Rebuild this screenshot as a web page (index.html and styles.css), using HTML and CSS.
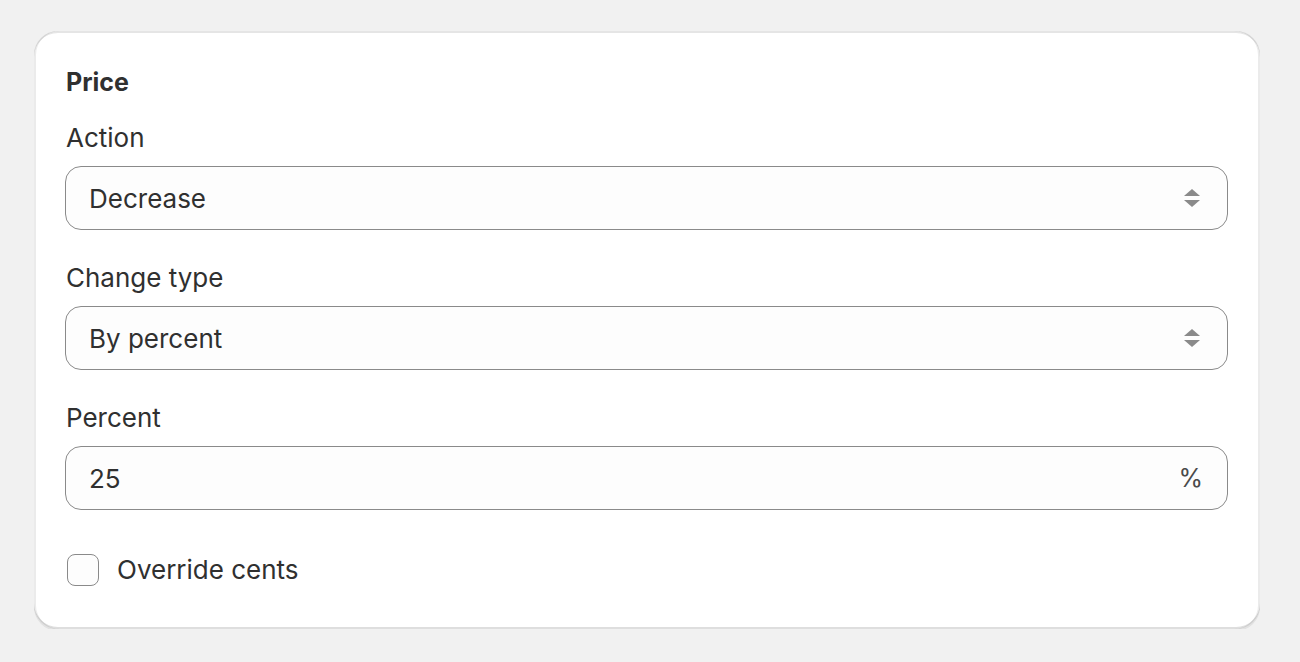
FILE: index.html
```html
<!DOCTYPE html>
<html lang="en">
<head>
<meta charset="utf-8">
<title>Price</title>
<link rel="stylesheet" href="styles.css">
</head>
<body>
  <section class="card">
    <h2 class="card-title">Price</h2>

    <div class="field">
      <label class="field-label" for="action">Action</label>
      <div class="select">
        <span class="select-value">Decrease</span>
        <svg class="select-arrows" width="16" height="24" viewBox="0 0 16 24" aria-hidden="true">
          <path d="M8 3 L16 10 L0 10 Z" />
          <path d="M0 14 L16 14 L8 21 Z" />
        </svg>
      </div>
    </div>

    <div class="field">
      <label class="field-label" for="change-type">Change type</label>
      <div class="select">
        <span class="select-value">By percent</span>
        <svg class="select-arrows" width="16" height="24" viewBox="0 0 16 24" aria-hidden="true">
          <path d="M8 3 L16 10 L0 10 Z" />
          <path d="M0 14 L16 14 L8 21 Z" />
        </svg>
      </div>
    </div>

    <div class="field">
      <label class="field-label" for="percent">Percent</label>
      <div class="input">
        <span class="input-value">25</span>
        <span class="input-suffix">%</span>
      </div>
    </div>

    <label class="checkbox">
      <span class="checkbox-box"></span>
      <span class="checkbox-label">Override cents</span>
    </label>
  </section>
</body>
</html>
```

FILE: styles.css
```css
html, body {
  margin: 0;
  padding: 0;
  background: #f1f1f1;
}

body {
  padding: 31px 40px 0 34px;
  font-family: Inter, "Noto Sans", "Liberation Sans", sans-serif;
  color: #303030;
  -webkit-font-smoothing: antialiased;
}

.card {
  width: 1226px;
  box-sizing: border-box;
  background: #ffffff;
  border-radius: 24px;
  padding: 32px 32px 39px 32px;
  box-shadow:
    0 2px 0 0 rgba(26, 26, 26, 0.07),
    inset 0 -2px 0 0 rgba(0, 0, 0, 0.13),
    inset -2px 0 0 0 rgba(0, 0, 0, 0.08),
    inset 2px 0 0 0 rgba(0, 0, 0, 0.08),
    inset 0 2px 0 0 rgba(204, 204, 204, 0.5);
  display: flex;
  flex-direction: column;
}

.card-title {
  margin: 0 0 19px 0;
  font-size: 25px;
  line-height: 38px;
  font-weight: 650;
}

.field {
  display: flex;
  flex-direction: column;
  margin-bottom: 30px;
}

.field:nth-of-type(3) {
  margin-bottom: 40px;
}

.field-label {
  font-size: 26px;
  line-height: 36px;
  margin-bottom: 10px;
}

.select,
.input {
  height: 64px;
  box-sizing: border-box;
  margin-left: -1px;
  border: 1px solid #8a8a8a;
  border-radius: 16px;
  background: #fdfdfd;
  display: flex;
  align-items: center;
  padding: 0 24px 0 23px;
  font-size: 26px;
}

.select-value,
.input-value {
  flex: 1;
}

.select-arrows {
  fill: #8a8a8a;
  margin-right: 3px;
}

.input-suffix {
  color: #4a4a4a;
  font-size: 25px;
}

.checkbox {
  display: flex;
  align-items: center;
  gap: 18px;
  margin-left: 1px;
}

.checkbox-box {
  width: 32px;
  height: 32px;
  box-sizing: border-box;
  border: 1.5px solid #8a8a8a;
  border-radius: 8px;
  background: #fdfdfd;
}

.checkbox-label {
  font-size: 26px;
  line-height: 40px;
}
```
